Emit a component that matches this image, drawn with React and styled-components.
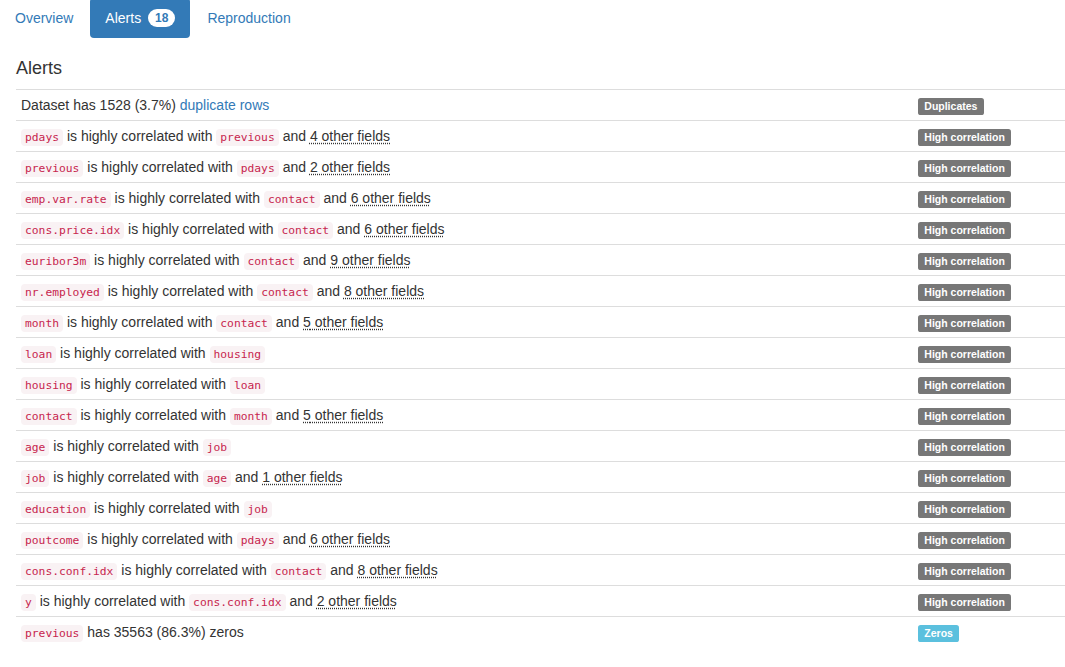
import React from "react";
import styled, { createGlobalStyle } from "styled-components";

const Global = createGlobalStyle`
  html, body { margin: 0; padding: 0; background: #fff; }
  body {
    font-family: "Liberation Sans", Arial, Helvetica, sans-serif;
    font-size: 14px;
    line-height: 1.42857143;
    color: #333;
    overflow: hidden;
  }
`;

const Page = styled.div`
  width: 1065px;
  margin-top: -2px;
`;

const Pills = styled.ul`
  display: flex;
  list-style: none;
  margin: 0;
  padding: 0;
`;

const Pill = styled.li`
  & + & { margin-left: 2px; }
`;

const PillLink = styled.a`
  display: block;
  padding: 10px 15px;
  line-height: 20px;
  border-radius: 4px;
  text-decoration: none;
  color: ${(p) => (p.$active ? "#fff" : "#337ab7")};
  background: ${(p) => (p.$active ? "#337ab7" : "transparent")};
`;

const PillBadge = styled.span`
  display: inline-block;
  min-width: 10px;
  margin-left: 3px;
  padding: 3px 7px;
  font-size: 12px;
  font-weight: bold;
  line-height: 1;
  color: #337ab7;
  background: #fff;
  border-radius: 10px;
  text-align: center;
  vertical-align: middle;
  white-space: nowrap;
  position: relative;
  top: -1px;
`;

const Section = styled.section`
  padding-left: 16px;
`;

const Heading = styled.h4`
  margin: 21px 0 10px;
  font-size: 18px;
  font-weight: 500;
  line-height: 1.1;
  color: #333;
`;

const Table = styled.table`
  width: 100%;
  border-collapse: collapse;
  border-spacing: 0;
`;

const Cell = styled.td`
  padding: 5px;
  height: 20px;
  line-height: 20px;
  vertical-align: top;
  border-top: 1px solid #ddd;
  width: ${(p) => (p.$narrow ? "142px" : "auto")};
`;

const Code = styled.code`
  padding: 2px 4px;
  font-family: "DejaVu Sans Mono", Consolas, "Liberation Mono", monospace;
  font-size: 11.3px;
  line-height: 1;
  color: #c7254e;
  background: #f9f2f4;
  border-radius: 4px;
`;

const Link = styled.a`
  color: #337ab7;
  text-decoration: none;
`;

const Abbr = styled.abbr`
  text-decoration: underline dotted;
  text-underline-offset: 2px;
  cursor: help;
`;

const Label = styled.span`
  display: inline;
  padding: 0.2em 0.6em 0.3em;
  font-size: 10.5px;
  font-weight: bold;
  line-height: 1;
  color: #fff;
  text-align: center;
  white-space: nowrap;
  vertical-align: baseline;
  border-radius: 0.25em;
  background: ${(p) => (p.$kind === "info" ? "#5bc0de" : "#777")};
`;

const correlations = [
  ["pdays", "previous", 4],
  ["previous", "pdays", 2],
  ["emp.var.rate", "contact", 6],
  ["cons.price.idx", "contact", 6],
  ["euribor3m", "contact", 9],
  ["nr.employed", "contact", 8],
  ["month", "contact", 5],
  ["loan", "housing", 0],
  ["housing", "loan", 0],
  ["contact", "month", 5],
  ["age", "job", 0],
  ["job", "age", 1],
  ["education", "job", 0],
  ["poutcome", "pdays", 6],
  ["cons.conf.idx", "contact", 8],
  ["y", "cons.conf.idx", 2],
];

export default function App() {
  return (
    <>
      <Global />
      <Page>
        <Pills>
          <Pill>
            <PillLink href="#">Overview</PillLink>
          </Pill>
          <Pill>
            <PillLink href="#" $active>
              Alerts <PillBadge>18</PillBadge>
            </PillLink>
          </Pill>
          <Pill>
            <PillLink href="#">Reproduction</PillLink>
          </Pill>
        </Pills>
        <Section>
          <Heading>Alerts</Heading>
          <Table>
            <tbody>
              <tr>
                <Cell>
                  Dataset has 1528 (3.7%) <Link href="#">duplicate rows</Link>
                </Cell>
                <Cell $narrow>
                  <Label>Duplicates</Label>
                </Cell>
              </tr>
              {correlations.map(([a, b, n], i) => (
                <tr key={i}>
                  <Cell>
                    <Code>{a}</Code> is highly correlated with <Code>{b}</Code>
                    {n > 0 && (
                      <>
                        {" "}and <Abbr title="other fields">{n} other fields</Abbr>
                      </>
                    )}
                  </Cell>
                  <Cell $narrow>
                    <Label>High correlation</Label>
                  </Cell>
                </tr>
              ))}
              <tr>
                <Cell>
                  <Code>previous</Code> has 35563 (86.3%) zeros
                </Cell>
                <Cell $narrow>
                  <Label $kind="info">Zeros</Label>
                </Cell>
              </tr>
            </tbody>
          </Table>
        </Section>
      </Page>
    </>
  );
}
